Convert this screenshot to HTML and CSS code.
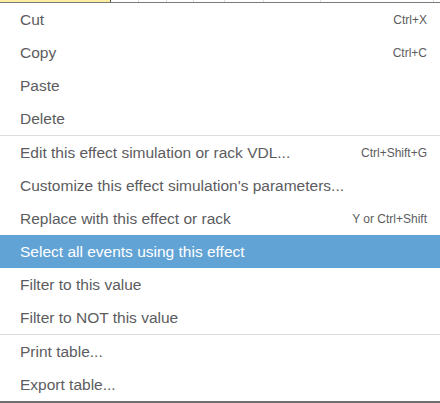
FILE: index.html
```html
<!DOCTYPE html>
<html>
<head>
<meta charset="utf-8">
<link rel="stylesheet" href="styles.css">
</head>
<body>
<div class="strip">
  <div class="cell cell-active" style="width:110px"></div>
  <div class="cell" style="width:27px"></div>
  <div class="cell" style="width:27px"></div>
  <div class="cell" style="width:26px"></div>
  <div class="cell" style="width:30px"></div>
  <div class="cell" style="width:38px"></div>
  <div class="cell" style="width:56px"></div>
  <div class="cell" style="width:112px"></div>
  <div class="cell cell-last"></div>
</div>
<div class="menu">
  <div class="group">
    <div class="item"><span class="label">Cut</span><span class="key">Ctrl+X</span></div>
    <div class="item"><span class="label">Copy</span><span class="key">Ctrl+C</span></div>
    <div class="item"><span class="label">Paste</span></div>
    <div class="item"><span class="label">Delete</span></div>
  </div>
  <div class="group">
    <div class="item"><span class="label">Edit this effect simulation or rack VDL...</span><span class="key">Ctrl+Shift+G</span></div>
    <div class="item"><span class="label">Customize this effect simulation's parameters...</span></div>
    <div class="item"><span class="label">Replace with this effect or rack</span><span class="key">Y or Ctrl+Shift</span></div>
    <div class="item item-active"><span class="label">Select all events using this effect</span></div>
    <div class="item"><span class="label">Filter to this value</span></div>
    <div class="item"><span class="label">Filter to NOT this value</span></div>
  </div>
  <div class="group">
    <div class="item"><span class="label">Print table...</span></div>
    <div class="item"><span class="label">Export table...</span></div>
  </div>
</div>
</body>
</html>
```

FILE: styles.css
```css
html, body {
  margin: 0;
  padding: 0;
  background: #ffffff;
  width: 440px;
  height: 403px;
  overflow: hidden;
}

body {
  font-family: "Liberation Sans", Arial, sans-serif;
}

.strip {
  display: flex;
  height: 2px;
  border-bottom: 1px solid #7a7a7a;
}

.cell {
  flex: none;
  height: 2px;
  border-right: 1px solid #dcdcdc;
  box-sizing: content-box;
}

.cell-active {
  background: #fbeea0;
  border-right-color: #555555;
}

.cell-last {
  flex: 1;
  border-right: none;
}

.menu {
  border-bottom: 2px solid #6e6e6e;
}

.group + .group {
  border-top: 1px solid #dddddd;
}

.item {
  display: flex;
  align-items: center;
  justify-content: space-between;
  height: 33px;
  padding: 0 13px 0 20px;
  color: #5c5c60;
}

.label {
  font-size: 15.5px;
  white-space: nowrap;
}

.key {
  font-size: 12px;
  white-space: nowrap;
}

.item-active {
  background: #62a3d6;
  color: #ffffff;
}
```
